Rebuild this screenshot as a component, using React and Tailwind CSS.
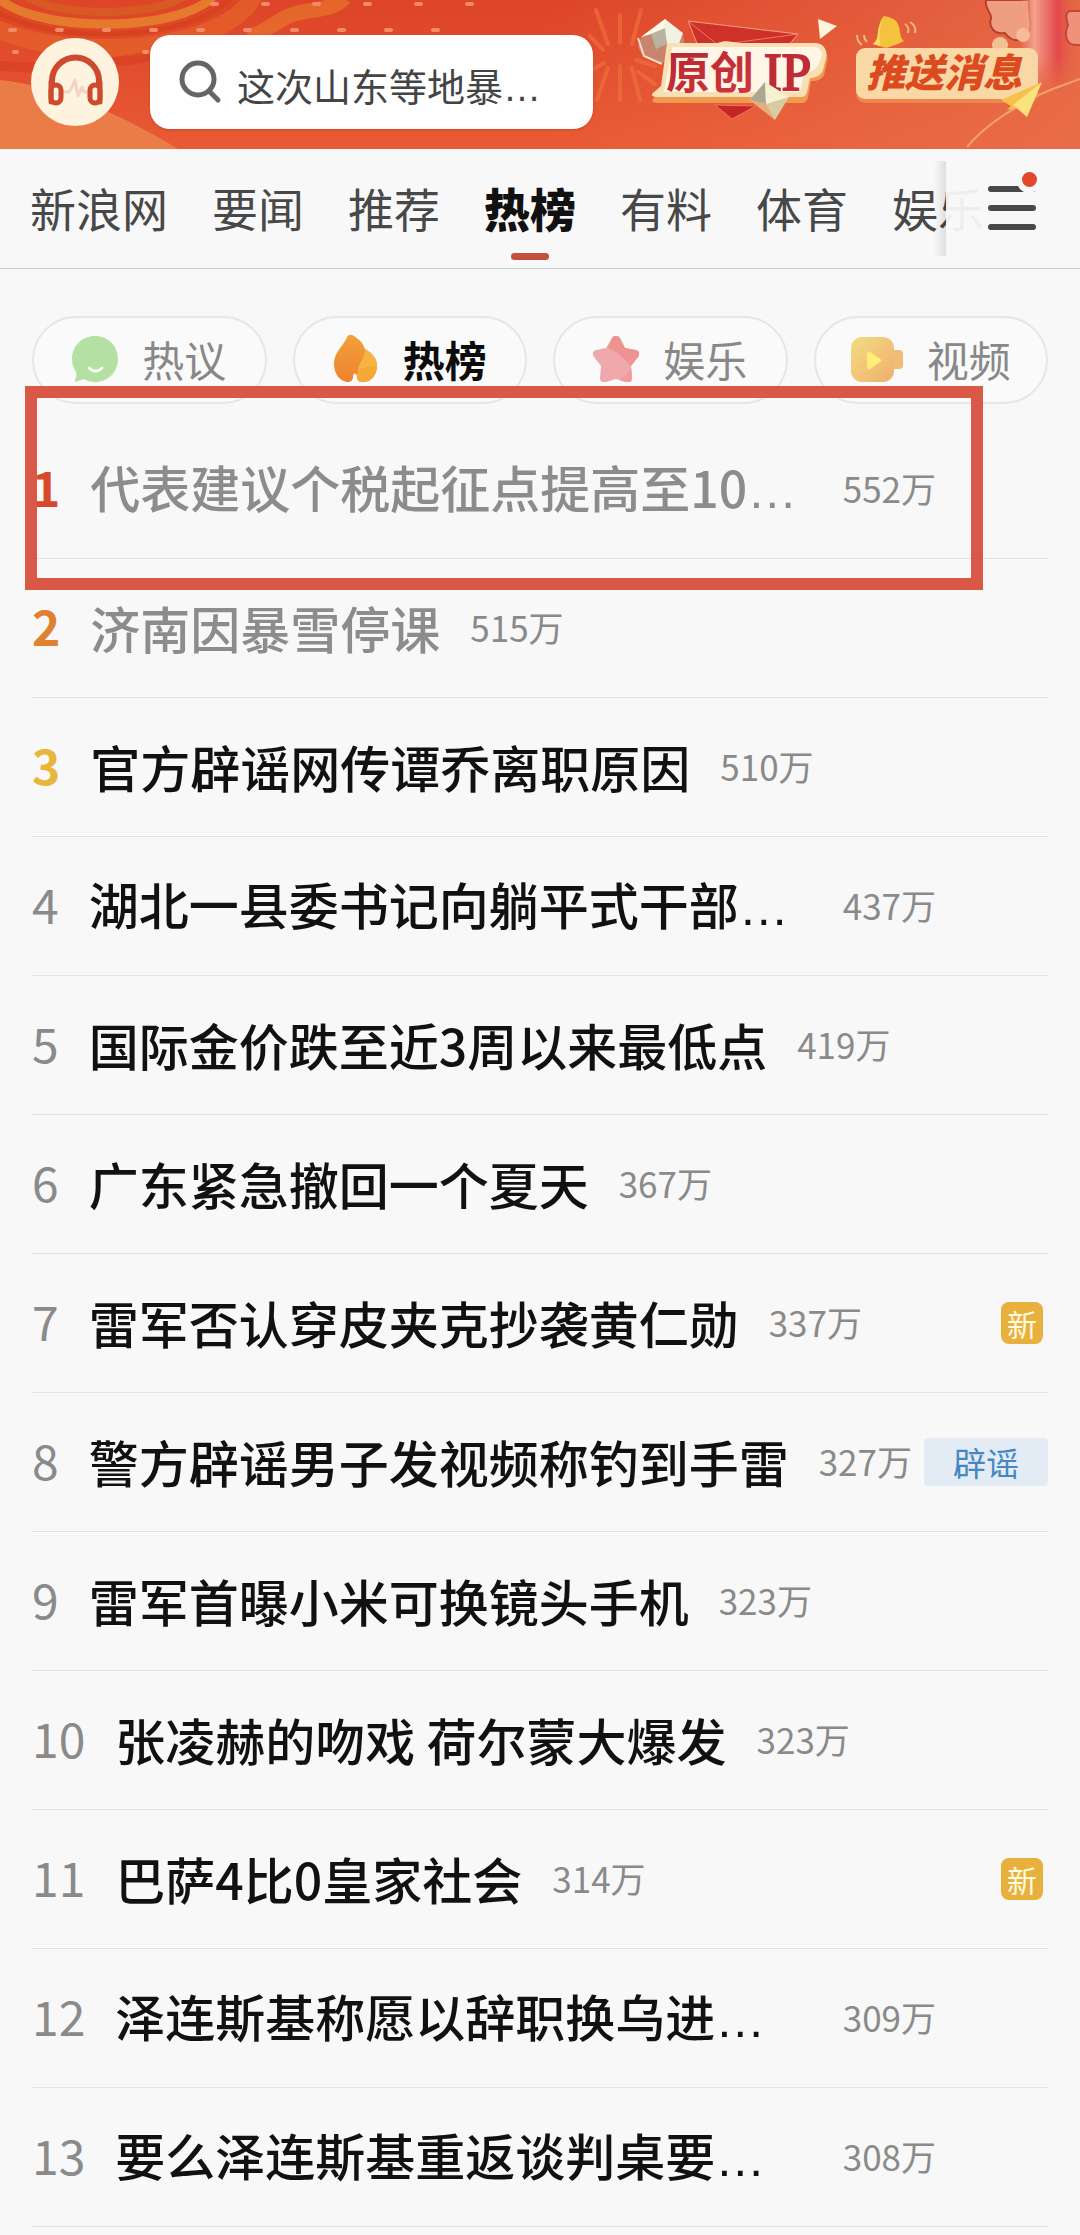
import { useState } from 'react';

const CHANNELS = ['新浪网', '要闻', '推荐', '热榜', '有料', '体育', '娱乐'];

const BOARDS = [
  { name: '热议', Icon: ChatIcon },
  { name: '热榜', Icon: FlameIcon },
  { name: '娱乐', Icon: StarIcon },
  { name: '视频', Icon: VideoIcon },
];

// cut: the title is too long for one line and ends in an ellipsis
const NEWS = [
  { title: '代表建议个税起征点提高至10', heat: 552, cut: true, read: true },
  { title: '济南因暴雪停课', heat: 515, read: true },
  { title: '官方辟谣网传谭乔离职原因', heat: 510 },
  { title: '湖北一县委书记向躺平式干部', heat: 437, cut: true },
  { title: '国际金价跌至近3周以来最低点', heat: 419 },
  { title: '广东紧急撤回一个夏天', heat: 367 },
  { title: '雷军否认穿皮夹克抄袭黄仁勋', heat: 337, tag: 'new' },
  { title: '警方辟谣男子发视频称钓到手雷', heat: 327, tag: 'rumor' },
  { title: '雷军首曝小米可换镜头手机', heat: 323 },
  { title: '张凌赫的吻戏 荷尔蒙大爆发', heat: 323 },
  { title: '巴萨4比0皇家社会', heat: 314, tag: 'new' },
  { title: '泽连斯基称愿以辞职换乌进', heat: 309, cut: true },
  { title: '要么泽连斯基重返谈判桌要', heat: 308, cut: true },
];

const RANK_COLORS = ['text-[#d64a2b] font-bold', 'text-[#e08030] font-bold', 'text-[#e8b63c] font-bold'];

function ChatIcon() {
  return (
    <svg viewBox="0 0 46 46" className="size-[46px]" aria-hidden="true">
      <path d="M23 0C10 0 0 10 0 23c0 6 2 9 4 13 1 3 0 6-1 8-1 2 1 2 3 1l6-2c3 2 7 3 11 3 13 0 23-10 23-23S36 0 23 0Z" fill="#b4e0a4" />
      <path d="M17 32c4 4 9 4 13 0" stroke="#f6fff2" strokeWidth="3" fill="none" strokeLinecap="round" />
    </svg>
  );
}

function FlameIcon() {
  return (
    <svg viewBox="0 0 46 48" className="h-12 w-[46px]" aria-hidden="true">
      <defs>
        <linearGradient id="flame" x1="0.4" y1="0" x2="0.3" y2="1">
          <stop offset="0" stopColor="#f2a03c" />
          <stop offset="1" stopColor="#ee8230" />
        </linearGradient>
      </defs>
      <path d="M14 2c1-2 4-3 7-1 6 4 9 7 11 13 7 4 12 9 12 17 0 9-6 16-14 16-4 0-6-2-6-5 0-4-4-5-4 0 0 3-2 5-6 5C7 46 1 39 1 29c0-9 5-14 9-20 2-3 3-4 4-7Z" fill="url(#flame)" />
      <path d="M32 14c7 4 12 9 12 17v1c-7-1-14 0-19 4 0-9 7-11 7-22Z" fill="#f5b444" />
      <path d="M25 36c5-4 12-5 19-4-1 9-6 15-14 15-4 0-6-2-6-5 0-2 0-4 1-6Z" fill="#f6a936" />
    </svg>
  );
}

function StarIcon() {
  return (
    <svg viewBox="0 0 46 46" className="size-[46px]" aria-hidden="true">
      <path d="M19 2c2-3 6-3 8 0l5 10 11 2c4 1 4 5 2 7l-7 9 1 12c0 4-3 5-6 4l-10-3-10 3c-4 1-6-1-6-4l1-12-7-9c-2-3-1-6 2-7l10-2 6-10Z" fill="#efa9ac" />
      <path d="M19 2c2-3 6-3 8 0l5 10 11 2c4 1 4 5 2 7l-7 9-10-10c-4-4-9-6-13-8l4-10Z" fill="#ed9490" />
      <path d="m38 30 1 12c0 4-3 5-6 4l-7-2c6-3 10-7 12-14Z" fill="#f09c9c" />
    </svg>
  );
}

function VideoIcon() {
  return (
    <svg viewBox="0 0 52 46" className="h-[46px] w-[52px]" aria-hidden="true">
      <defs>
        <linearGradient id="video" x1="0" y1="0" x2="1" y2="1">
          <stop offset="0" stopColor="#f0dc84" />
          <stop offset="0.5" stopColor="#f3c578" />
          <stop offset="1" stopColor="#ecb070" />
        </linearGradient>
      </defs>
      <rect x="40" y="14" width="12" height="19" rx="4" fill="#f0bd78" />
      <rect x="0" y="1" width="43" height="45" rx="11" fill="url(#video)" />
      <path d="M16 18c0-2 1-3 3-2l10 7c2 1 2 2 0 3l-10 7c-2 1-3 0-3-2V18Z" fill="#fdf075" />
    </svg>
  );
}

function HeadphonesIcon() {
  return (
    <svg viewBox="0 0 88 88" className="size-[88px]" aria-hidden="true">
      <path d="M32 54h6l3-5 3-7 3 16 4-9 2 5h5" stroke="#f3d3c4" strokeWidth="3" fill="none" strokeLinejoin="round" />
      <path d="M21 50V43a23 23 0 0 1 47 0v7" stroke="#cf4a2c" strokeWidth="6" fill="none" />
      <rect x="20" y="47" width="10" height="18" rx="5" stroke="#cf4a2c" strokeWidth="5" fill="#fdf3df" />
      <rect x="59" y="47" width="10" height="18" rx="5" stroke="#cf4a2c" strokeWidth="5" fill="#fdf3df" />
      <path d="M20 44v20M69 44v20" stroke="#cf4a2c" strokeWidth="5" strokeLinecap="round" />
    </svg>
  );
}

function Banner() {
  return (
    <svg viewBox="0 0 1080 149" preserveAspectRatio="xMaxYMid slice" className="absolute inset-0 size-full" role="img" aria-label="原创IP 推送消息">
      <defs>
        <linearGradient id="sky" x1="0" y1="0" x2="0" y2="1">
          <stop offset="0" stopColor="#dd4428" />
          <stop offset="1" stopColor="#e95a34" />
        </linearGradient>
        <linearGradient id="glow" x1="0" y1="0" x2="1" y2="0">
          <stop offset="0.5" stopColor="#e97650" stopOpacity="0" />
          <stop offset="1" stopColor="#e97650" stopOpacity="0.7" />
        </linearGradient>
        <linearGradient id="ribbon" x1="0" y1="0" x2="1" y2="0">
          <stop offset="0" stopColor="#f6a08c" stopOpacity="0" />
          <stop offset="0.25" stopColor="#f3a08c" />
          <stop offset="0.65" stopColor="#e2484a" />
          <stop offset="1" stopColor="#e2604c" stopOpacity="0" />
        </linearGradient>
        <linearGradient id="ribbonFade" x1="0" y1="0" x2="0" y2="1">
          <stop offset="0.6" stopColor="#fff" />
          <stop offset="1" stopColor="#000" />
        </linearGradient>
        <mask id="ribbonMask">
          <rect x="1010" y="0" width="70" height="92" fill="url(#ribbonFade)" />
        </mask>
        <linearGradient id="ink" x1="0" y1="0" x2="1" y2="1">
          <stop offset="0" stopColor="#b52630" />
          <stop offset="1" stopColor="#d2383c" />
        </linearGradient>
      </defs>
      <rect width="1080" height="149" fill="url(#sky)" />
      <rect width="1080" height="149" fill="url(#glow)" />

      {/* swirls on the left */}
      <g fill="none">
        <ellipse cx="105" cy="-14" rx="150" ry="62" stroke="#e6642a" strokeWidth="18" opacity="0.7" />
        <ellipse cx="105" cy="-14" rx="128" ry="48" stroke="#d6421e" strokeWidth="5" />
        <ellipse cx="105" cy="-14" rx="112" ry="38" stroke="#e67a2c" strokeWidth="9" />
        <ellipse cx="105" cy="-14" rx="86" ry="26" stroke="#d85a22" strokeWidth="8" />
        <path d="M248 37c20-4 30-22 60-26 20-3 30-5 36-13" stroke="#e8742c" strokeWidth="15" opacity="0.7" />
        <path d="M0 66c60 4 100 0 150-10" stroke="#d63a20" strokeWidth="10" opacity="0.5" />
      </g>
      <g stroke="#f58a68" strokeWidth="4" strokeLinecap="round">
        <path d="M212 4H480" strokeDasharray="5 46" />
        <path d="M10 30H440" strokeDasharray="5 42" />
        <path d="M14 52H150" strokeDasharray="3 127" />
      </g>
      <path d="M0 80c45 4 110 27 178 69H0Z" fill="#ea7c48" />

      {/* firework behind the first badge */}
      <path d="M620 42V15M620 66v34M608 44 596 10M632 44 641 10M603 50 590 36M604 63 592 70M608 68 597 100M632 68 640 100M636 60 655 66M638 72 655 84" stroke="#f0743c" strokeWidth="4" strokeLinecap="round" opacity="0.6" />

      {/* 原创IP */}
      <path d="m688 21 110 13-10 12h-90Z" fill="#cf3029" stroke="#f5a184" />
      <path d="m688 21 30 24 80-11" stroke="#ed7a62" fill="none" />
      <path d="m641 37 24-18 18 15 2 12-24 18-18-8-5-9Z" fill="#c98470" />
      <path d="m641 37 24-18 6 8-20 7Z" fill="#fffbe8" />
      <path d="m665 19 18 14-6 16-10-6-4-14Z" fill="#f3f2e2" />
      <path d="m651 34 14-6 2 16-11 5Z" fill="#b9b3a2" />
      <path d="m638 38 6 18 18 8" stroke="#f4ddc8" strokeWidth="2" fill="none" />
      <path d="m715 105 17 14 24-13Z" fill="#c42627" stroke="#f0765c" />
      <path d="m818 19 19 7-17 13Z" fill="#fff5dc" />
      <path d="M667 46h50l8-3 16 3h74c9 0 14 8 12 16l-3 13c-2 5-8 6-13 6l-3 16c-1 4-3 6-7 6H658c-6 0-7-2-4-5l7-7Z" fill="#f09a50" />
      <path d="M667 43h50l8-2 16 2h74c9 0 13 8 11 15l-3 12c-2 6-8 8-13 8l-3 14c-1 4-3 5-7 5H656c-5 0-5-3-2-5l7-6Z" fill="#f8dfb4" />
      <path d="M672 47h142c7 0 9 6 7 11-2 9-7 14-17 15l-4 19H664Z" fill="#fff6e8" />
      <text x="666" y="89" fontSize="44" fontWeight="700" fill="url(#ink)" className="font-['Liberation_Serif','Noto_Sans_CJK_SC',serif]">原创</text>
      <text x="764" y="90" fontSize="53" fill="#bf2c36" stroke="#bf2c36" strokeWidth="2" className="font-['Liberation_Serif',serif]">IP</text>
      <path d="m765 82 24 15-14 23-25-20Z" fill="#d9cba0" />
      <path d="m765 82-15 18 16 4Z" fill="#a9a890" />
      <path d="m765 82 24 15-23 7Z" fill="#f7f1d4" />
      <path d="m766 104 9 16-25-20Z" fill="#e2ae80" />

      {/* peach shapes and ribbon on the right */}
      <path d="M986 0c-2 9 6 12 5 19-3 8 4 16 14 14 8 11 21 9 25-3 2-9-2-17-1-30Z" fill="#ee9f82" stroke="#b84030" strokeWidth="2" />
      <rect x="1020" y="0" width="58" height="92" fill="url(#ribbon)" mask="url(#ribbonMask)" />
      <circle cx="1023" cy="35" r="7" fill="#f6bc98" />
      <circle cx="1000" cy="45" r="8" fill="#f3c092" />
      <path d="M1082 11h-12c-5 1-4 8-2 14-4 10-2 20 8 20h6Z" fill="#f0927a" stroke="#c04838" strokeWidth="2" />

      {/* 推送消息 */}
      <rect x="856" y="52" width="182" height="51" rx="9" fill="#ef8650" />
      <rect x="856" y="48" width="182" height="51" rx="9" fill="#f9d8a6" />
      <path d="M873 44c6-4 4-11 6-17 1-6 3-9 5-11 6 1 12 3 14 8 3 7 1 13 6 17l-6 3-12 4Z" fill="#f4c23c" />
      <path d="M884 16c-4 8-5 18-4 30l-7-2c6-4 4-11 6-17Z" fill="#fbdc62" />
      <path d="M857 35c0 5 2 8 5 10M864 35c0 3 1 5 3 7M905 24c3 2 4 6 3 9M910 22c5 3 6 7 5 11" stroke="#f3b480" strokeWidth="2" fill="none" />
      <text x="866" y="87" fontSize="39" fontWeight="900" fontStyle="italic" fill="#dc4a20" className="font-['Noto_Sans_CJK_SC',sans-serif]">推送消息</text>
      <path d="M967 147c20-24 46-38 68-50 15-8 30-12 45-18" stroke="#f3a068" strokeWidth="2" fill="none" />
      <path d="m1042 82-41 18 10 6-4 4 7-1Z" fill="#f6c04a" />
      <path d="m1042 82-29 23 14 12Z" fill="#fae27c" />
    </svg>
  );
}

function Header() {
  return (
    <header className="relative flex h-[149px] items-center overflow-hidden pb-[15px] pt-[30px]">
      <Banner />
      <button type="button" aria-label="听新闻" className="relative ml-[31px] shrink-0 rounded-full bg-[#fdf3df]">
        <HeadphonesIcon />
      </button>
      <label className="relative ml-[31px] flex h-[94px] w-[41%] items-center gap-[14px] rounded-[20px] bg-[#fefefe] pl-[29px] pr-6 shadow">
        <svg viewBox="0 0 44 44" className="size-11 shrink-0" fill="none" stroke="#646666" strokeWidth="5" strokeLinecap="round" aria-hidden="true">
          <circle cx="19" cy="19" r="16" />
          <path d="m31 32 8 8" />
        </svg>
        <input
          type="text"
          aria-label="搜索"
          placeholder="这次山东等地暴…"
          className="w-full min-w-0 bg-transparent pt-3 font-['Liberation_Sans','Noto_Sans_CJK_SC',sans-serif] text-[38px] leading-[56px] text-[#444] outline-none placeholder:text-[#444]"
        />
      </label>
    </header>
  );
}

function ChannelNav() {
  const [active, setActive] = useState('热榜');
  return (
    <nav className="relative flex h-[120px] items-stretch overflow-hidden border-b border-[#c9cecb]">
      <div className="flex gap-11 whitespace-nowrap pl-[30px] text-[46px] leading-[60px] text-[#484848]">
        {CHANNELS.map((name) => (
          <button key={name} type="button" onClick={() => setActive(name)}
            className={`relative pb-1 ${name === active ? 'font-black text-[#111]' : ''}`}>
            {name}
            {name === active && <span className="absolute bottom-2 left-1/2 h-[7px] w-[38px] -translate-x-1/2 rounded-full bg-[#c4513b]" />}
          </button>
        ))}
      </div>
      {/* menu panel lies over the end of the channel list */}
      <div className="absolute inset-y-0 right-0 flex w-[134px] items-center justify-end bg-[#f8f8f8]/95 pb-1 pr-11">
        <span className="absolute inset-y-3 -left-3 w-3 bg-linear-to-r from-transparent to-black/10" />
        <button type="button" aria-label="全部频道" className="relative">
          <svg viewBox="0 0 50 56" className="h-14 w-[50px]" aria-hidden="true">
            <path d="M5 10h42M5 29h42M5 48h42" stroke="#484848" strokeWidth="6" strokeLinecap="round" />
            <circle cx="43" cy="2" r="12" fill="#f8f8f8" />
          </svg>
          <span className="absolute -right-px -top-[7px] size-[15px] rounded-full bg-[#e2492a]" />
        </button>
      </div>
    </nav>
  );
}

function BoardTabs() {
  const [active, setActive] = useState('热榜');
  return (
    <div className="grid grid-cols-4 gap-[26px] px-8 pt-[47px]">
      {BOARDS.map(({ name, Icon }) => (
        <button key={name} type="button" onClick={() => setActive(name)}
          className={`flex h-[88px] items-center justify-center gap-6 rounded-full border-2 border-[#e6e6e6] bg-[#fafafa] pb-[3px] text-[42px] leading-none ${name === active ? 'font-bold text-[#0c0c0c]' : 'text-[#888]'}`}>
          <Icon />
          {name}
        </button>
      ))}
    </div>
  );
}

function NewsRow({ item, rank }) {
  return (
    <li className="flex h-[139px] items-center whitespace-nowrap border-b border-[#e3e3e3]">
      <span className={`mr-[30px] shrink-0 pb-1.5 text-[48px] leading-[72px] ${RANK_COLORS[rank - 1] ?? 'text-[#8a8a8a]'}`}>{rank}</span>
      <a href="#" className={`pb-0.5 text-[50px] font-medium leading-[72px] ${item.cut ? 'flex-1' : ''} ${item.read ? 'text-[#8c8c8c]' : 'text-[#111]'}`}>
        {item.title}
        {item.cut && <span className="font-['Liberation_Sans',sans-serif]">…</span>}
      </a>
      <span className={`ml-[30px] shrink-0 pb-0.5 text-[35px] leading-[48px] text-[#8a8a8a] ${item.cut ? 'mr-28' : ''}`}>{item.heat}万</span>
      {item.tag === 'new' && (
        <span className="ml-auto mr-[5px] flex size-[42px] items-center justify-center rounded-lg bg-[#e8b03c] text-[30px] leading-none text-[#fffbe0]">新</span>
      )}
      {item.tag === 'rumor' && (
        <span className="ml-auto shrink-0 rounded bg-[#e3ebf5] px-[29px] text-[33px] leading-[48px] text-[#4488bf]">辟谣</span>
      )}
    </li>
  );
}

export default function App() {
  return (
    <div className="min-h-screen bg-[#f8f8f8] font-['Noto_Sans_CJK_SC',sans-serif]">
      <Header />
      <ChannelNav />
      <main className="relative">
        <BoardTabs />
        <ol className="mt-4 px-8 pb-2">
          {NEWS.map((item, i) => (
            <NewsRow key={item.title} item={item} rank={i + 1} />
          ))}
        </ol>
        {/* marker round the first entry */}
        <div className="pointer-events-none absolute left-[25px] right-[97px] top-[117px] h-[204px] border-12 border-[#da5847]" />
      </main>
    </div>
  );
}
